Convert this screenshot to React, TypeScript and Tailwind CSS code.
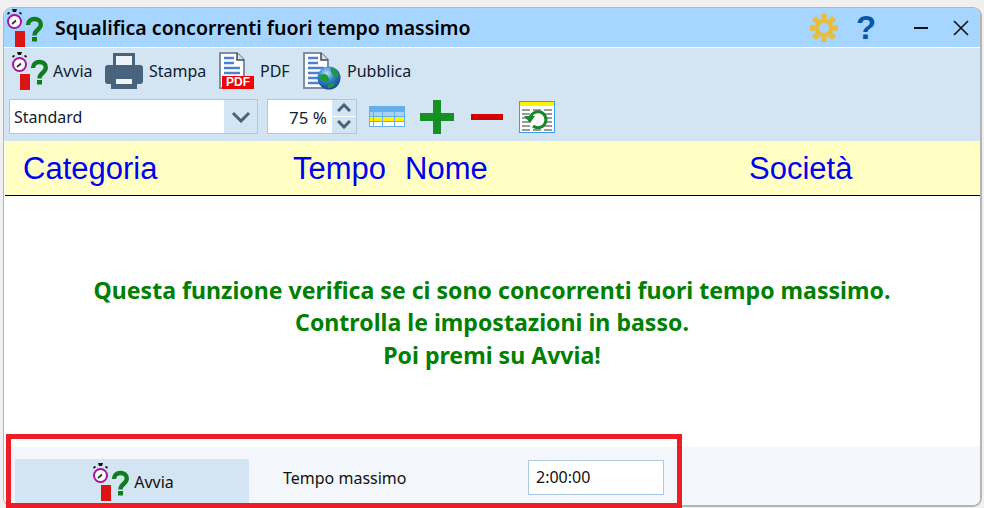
const ui = "font-['Noto_Sans',sans-serif]";

function AppIcon({ className }: { className: string }) {
  return (
    <svg viewBox="0 0 38 38" className={className}>
      <path d="M6 0h5l-1 3H7z" fill="#111" />
      <path d="M1.500 5l2-1.500M15.500 5l-2-1.500" stroke="#111" strokeWidth="1.600" />
      <circle cx="8.500" cy="12.500" r="6.500" fill="#fff" stroke="#a814a0" strokeWidth="2" />
      <path d="M6 15l4-3.500" stroke="#333" strokeWidth="1.800" />
      <rect x="9" y="22" width="10" height="16" fill="#dd1414" />
      <path d="M22 16c0-8 12.800-8 12.800-.5 0 5.500-6.300 5-6.300 11" fill="none" stroke="#0f7d1e" strokeWidth="4.400" />
      <rect x="26" y="28" width="5" height="4.500" fill="#0f7d1e" />
    </svg>
  );
}

function Printer() {
  return (
    <svg viewBox="0 0 38 36" className="w-[38px] h-[36px]">
      <path d="M3 12h32a3 3 0 0 1 3 3v13a3 3 0 0 1-3 3h-3v-7H6v7H3a3 3 0 0 1-3-3V15a3 3 0 0 1 3-3z" fill="#48647c" />
      <path d="M8 0h22v14H8z" fill="#48647c" />
      <path d="M11 3h16v9H11z" fill="#eef3f7" />
      <path d="M6 22h26v14H6z" fill="#48647c" />
      <path d="M11 26h16v5H11z" fill="#eef3f7" />
    </svg>
  );
}

function DocLines() {
  return (
    <>
      <path d="M1 1h17l7 7v28H1z" fill="#fff" stroke="#7f8ea3" strokeWidth="2" />
      <path d="M18 1v7h7" fill="#d7dee8" stroke="#3e4b5e" strokeWidth="1.500" />
      <path d="M5 6h10M5 11h10M5 16h16M5 21h16M5 26h16M5 31h16" stroke="#4f7fd0" strokeWidth="2.600" />
    </>
  );
}

function PdfIcon() {
  return (
    <div className="relative w-[36px] h-[38px]">
      <svg viewBox="0 0 27 38" className="ml-[1px] w-[27px] h-[38px]">
        <DocLines />
      </svg>
      <span className="absolute bottom-[1px] left-[4px] w-[32px] h-[13px] bg-[#f00000] text-white text-[12px] leading-[13px] font-bold text-center font-['Liberation_Sans',sans-serif]">
        PDF
      </span>
    </div>
  );
}

function PubblicaIcon() {
  return (
    <svg viewBox="0 0 38 38" className="w-[38px] h-[38px]">
      <defs>
        <radialGradient id="globe" cx="0.4" cy="0.3" r="0.8">
          <stop offset="0" stopColor="#bfe3f7" />
          <stop offset="0.45" stopColor="#2f7fd0" />
          <stop offset="1" stopColor="#123a78" />
        </radialGradient>
      </defs>
      <DocLines />
      <circle cx="26" cy="26" r="11.500" fill="url(#globe)" />
      <path d="M16 24c3-2 6-3 8-1 2 3 3 5 1 7-4 1-8-2-9-6zM28 16c3 0 7 4 8 8-2 2-5 1-6-1-2-2-3-5-2-7zM25 33c3-2 6-2 7-1-2 3-4 4-7 4z" fill="#1f9a3a" />
    </svg>
  );
}

function TableIcon() {
  return (
    <svg viewBox="0 0 36 21" className="w-[36px] h-[21px]">
      <rect x="0.500" y="0.500" width="35" height="20" fill="#fff" stroke="#64aeea" />
      <rect x="1" y="1" width="34" height="5" fill="#64aeea" />
      <rect x="1" y="6" width="34" height="4" fill="#a9d2f2" />
      <rect x="1" y="11" width="34" height="4" fill="#fff200" />
      <path d="M1 10.500h34M1 15.500h34M4.500 6v15M13.500 6v15M25.500 6v15" stroke="#64aeea" />
    </svg>
  );
}

function ResetIcon() {
  return (
    <svg viewBox="0 0 36 32" className="w-[36px] h-[32px]">
      <rect x="0.500" y="0.500" width="35" height="31" fill="#fff" stroke="#3f9be8" />
      <rect x="1" y="1" width="34" height="4" fill="#fff200" />
      <path d="M3 9h8M14 9h8M25 9h8M3 13h8M25 13h8M3 17h8M25 17h8M3 21h8M25 21h8M3 25h8M25 25h8M3 29h8M14 29h8M25 29h8" stroke="#9a9a9a" strokeWidth="2" />
      <path d="M11 18a8 8 0 1 1 3 7" fill="none" stroke="#15882a" strokeWidth="3" />
      <path d="M5 15h11l-5 7z" fill="#15882a" />
    </svg>
  );
}

function Gear() {
  return (
    <svg viewBox="0 0 28 28" className="w-[28px] h-[28px]">
      <g stroke="#e8bd3f" strokeWidth="5.500">
        <path d="M14 0v28M0 14h28M4 4l20 20M24 4L4 24" />
      </g>
      <circle cx="14" cy="14" r="9" fill="#e8bd3f" />
      <circle cx="14" cy="14" r="5" fill="#a6d5ff" />
    </svg>
  );
}

export default function App() {
  return (
    <div className={`relative w-[984px] h-[508px] bg-[#f0f0f0] pt-[7px] pl-[3px] pr-[2px] pb-[1px] overflow-hidden ${ui}`}>
      {/* Window */}
      <div className="h-full flex flex-col bg-white border border-r-2 border-b-2 border-[#b4b4b4] rounded-[9px] overflow-hidden">
        {/* Title bar */}
        <div className="h-[40px] shrink-0 flex items-center bg-[#a6d5ff] border-b border-white">
          <AppIcon className="ml-[2px] w-[38px] h-[38px] shrink-0" />
          <span className="ml-[11px] text-[19.500px] font-semibold text-black leading-none">
            Squalifica concorrenti fuori tempo massimo
          </span>
          <div className="ml-auto flex items-center">
            <Gear />
            <span className="ml-[18px] w-[18px] text-center text-[33px] leading-none font-bold text-[#0b55a8] font-['Liberation_Sans',sans-serif]">?</span>
            <span className="ml-[40px] w-[14px] h-[2px] bg-[#111]" />
            <svg viewBox="0 0 16 16" className="ml-[25px] mr-[11px] w-[16px] h-[16px]">
              <path d="M1 1l14 14M15 1L1 15" stroke="#111" strokeWidth="1.600" />
            </svg>
          </div>
        </div>

        {/* Toolbar */}
        <div className="h-[93px] shrink-0 bg-[#d3e4f3] text-[16px] text-[#10202e]">
          <div className="h-[46px] pl-[7px] flex items-center">
            <AppIcon className="w-[38px] h-[38px] shrink-0" />
            <span className="ml-[4px] w-[52px]">Avvia</span>
            <Printer />
            <span className="ml-[6px] w-[69px]">Stampa</span>
            <PdfIcon />
            <span className="ml-[6px] w-[43px]">PDF</span>
            <PubblicaIcon />
            <span className="ml-[6px]">Pubblica</span>
          </div>
          <div className="mt-[5px] pl-[5px] flex items-center">
            <div className="w-[249px] h-[35px] flex bg-white border border-[#a9c9e6]">
              <span className="flex-1 pl-[4px] leading-[35px]">Standard</span>
              <span className="w-[33px] flex items-center justify-center bg-[#d3e4f3]">
                <svg viewBox="0 0 20 12" className="w-[20px] h-[12px]">
                  <path d="M2 2l8 8 8-8" fill="none" stroke="#48647c" strokeWidth="3" />
                </svg>
              </span>
            </div>
            <div className="ml-[9px] w-[90px] h-[35px] flex bg-white border border-[#a9c9e6]">
              <span className="flex-1 pr-[5px] text-right text-[17px] leading-[35px]">75 %</span>
              <span className="w-[24px] flex flex-col bg-[#d3e4f3]">
                <span className="h-1/2 flex items-center justify-center border-b border-white">
                  <svg viewBox="0 0 14 9" className="w-[14px] h-[9px]">
                    <path d="M1 8l6-6 6 6" fill="none" stroke="#48647c" strokeWidth="3" />
                  </svg>
                </span>
                <span className="h-1/2 flex items-center justify-center">
                  <svg viewBox="0 0 14 9" className="w-[14px] h-[9px]">
                    <path d="M1 1l6 6 6-6" fill="none" stroke="#48647c" strokeWidth="3" />
                  </svg>
                </span>
              </span>
            </div>
            <span className="ml-[12px]"><TableIcon /></span>
            <svg viewBox="0 0 34 34" className="ml-[15px] w-[34px] h-[34px]">
              <path d="M13 0h8v13h13v8H21v13h-8V21H0v-8h13z" fill="#169022" />
            </svg>
            <span className="ml-[17px] w-[32px] h-[6px] bg-[#d20000]" />
            <span className="ml-[16px]"><ResetIcon /></span>
          </div>
        </div>

        {/* Column header */}
        <div className="h-[55px] shrink-0 ml-[1px] grid grid-cols-[270px_112px_344px_1fr] items-center pl-[18px] pt-[3px] bg-[#ffffc4] border-b border-black text-[31px] text-[#0000f0] font-['Liberation_Sans',sans-serif]">
          <span>Categoria</span>
          <span>Tempo</span>
          <span>Nome</span>
          <span>Società</span>
        </div>

        {/* Message */}
        <div className="flex-1 flex flex-col justify-center items-center pt-[2px] text-[23.100px] leading-[32.500px] font-bold text-[#008000]">
          <p>Questa funzione verifica se ci sono concorrenti fuori tempo massimo.</p>
          <p>Controlla le impostazioni in basso.</p>
          <p>Poi premi su Avvia!</p>
        </div>

        {/* Settings */}
        <div className="h-[58px] shrink-0 flex bg-[#f3f6fa] pt-[12px] pl-[11px] text-[16px] text-[#111]">
          <div className="w-[234px] h-[46px] pl-[2px] flex items-center justify-center bg-[#d3e4f3]">
            <AppIcon className="w-[38px] h-[38px] shrink-0" />
            <span className="ml-[4px]">Avvia</span>
          </div>
          <span className="ml-[34px] w-[245px] mt-[7px]">Tempo massimo</span>
          <div className="mt-[1px] w-[136px] h-[35px] pl-[7px] bg-white border border-[#a9c9e6] leading-[33px]">2:00:00</div>
        </div>
      </div>

      {/* Red annotation box */}
      <div className="absolute left-[6px] top-[434px] w-[676px] h-[74px] border-[5px] border-[#ee1c25]" />
    </div>
  );
}
